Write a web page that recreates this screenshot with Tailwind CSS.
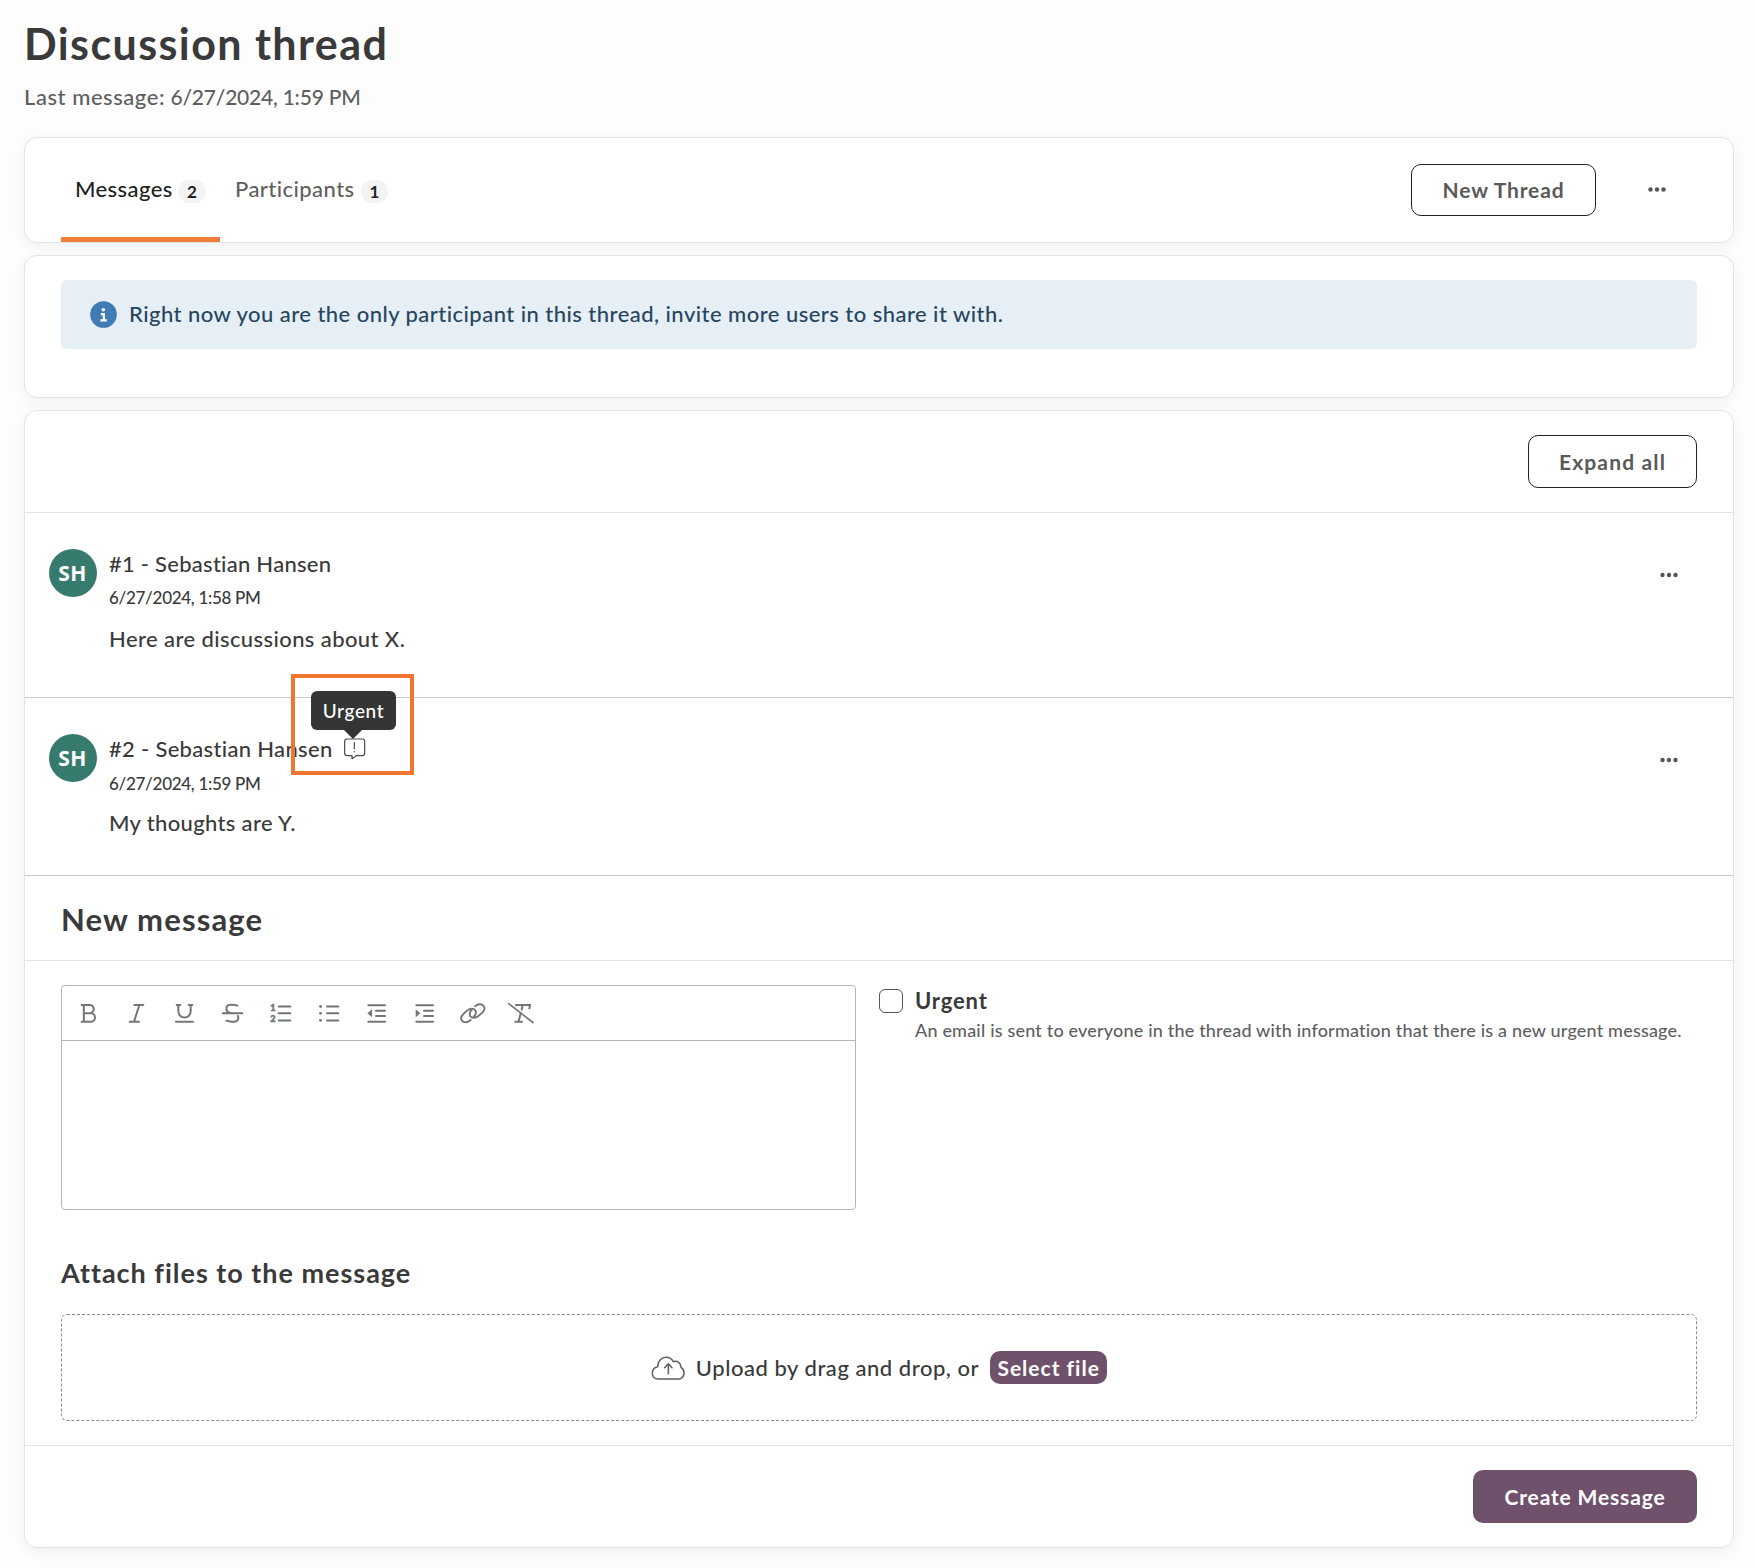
<!DOCTYPE html>
<html lang="en">
<head>
<meta charset="utf-8">
<title>Discussion thread</title>
<script src="https://cdn.jsdelivr.net/npm/@tailwindcss/browser@4"></script>
</head>
<body class="bg-[#fdfdfd] font-['Lato','Open_Sans',sans-serif] font-medium text-[22px] leading-7 text-[#3a3a3a] whitespace-nowrap">
<main class="flex flex-col w-[1710px] ml-6 pt-5 pb-5">
  <h1 class="text-[43px] leading-[48px] font-bold tracking-[1.42px]">Discussion thread</h1>
  <p class="mt-[15px] mb-[26px] text-[#5f5f5f]"><span class="tracking-[0.55px]">Last message:</span> <span class="text-[21px] tracking-[-0.22px]">6/27/2024, 1:59 PM</span></p>

  <section class="flex h-[106px] justify-between rounded-[13px] border border-[#e3e3e3] bg-white px-9 shadow-[0_4px_16px_rgba(0,0,0,0.05)]">
    <nav class="flex">
      <a class="flex w-[159px] items-center border-b-[5px] border-[#f07d3a] pt-[3px] pl-[14px] text-[#1f1f1f]">
        <span class="w-[103px] tracking-[0.4px]">Messages</span>
        <span class="mt-[5px] flex h-[23px] w-7 items-center justify-center rounded-full bg-[#f3f3f3] text-[17px] font-bold">2</span>
      </a>
      <a class="flex items-center border-b-[5px] border-transparent pt-[3px] pl-[15px] text-[#5f5f5f]">
        <span class="w-[126px] tracking-[0.44px]">Participants</span>
        <span class="mt-[5px] flex h-[23px] w-[27px] items-center justify-center rounded-full bg-[#f3f3f3] text-[17px] font-bold text-[#1f1f1f]">1</span>
      </a>
    </nav>
    <div class="flex items-center">
      <button class="flex h-[52px] w-[185px] items-center justify-center rounded-[10px] border border-[#222] font-bold text-[21px] tracking-[0.85px] text-[#5a5a5a]">New Thread</button>
      <button class="ml-5 flex w-[81px] justify-center pb-px" aria-label="More">
        <svg class="h-6 w-6" viewBox="0 0 24 24" fill="#555"><circle cx="5.5" cy="11.5" r="2.2"/><circle cx="12" cy="11.5" r="2.2"/><circle cx="18.5" cy="11.5" r="2.2"/></svg>
      </button>
    </div>
  </section>

  <section class="mt-3 h-[143px] rounded-[13px] border border-[#e3e3e3] bg-white px-9 pt-6 shadow-[0_4px_16px_rgba(0,0,0,0.05)]">
    <div class="flex h-[69px] items-center rounded-md bg-[#e6eef6] pl-[29px] pb-px text-[#26465f]">
      <svg class="h-[27px] w-[27px]" viewBox="0 0 27 27"><circle cx="13.5" cy="13.5" r="13.3" fill="#3f7bb5"/><circle cx="13.3" cy="8.7" r="1.8" fill="#fff"/><path d="M10.8 13.2h3v5.9M10.4 19.3h6.4" stroke="#fff" stroke-width="2.2" fill="none"/></svg>
      <span class="ml-3 pb-px tracking-[0.46px]">Right now you are the only participant in this thread, invite more users to share it with.</span>
    </div>
  </section>

  <section class="mt-3 rounded-[13px] border border-[#e3e3e3] bg-white shadow-[0_4px_16px_rgba(0,0,0,0.05)]">
    <div class="flex h-[102px] items-start justify-end border-b border-[#e3e3e3] px-9 pt-6">
      <button class="flex h-[53px] w-[169px] items-center justify-center rounded-[10px] border border-[#222] font-bold text-[21px] tracking-[1.15px] text-[#5a5a5a]">Expand all</button>
    </div>

    <article class="flex h-[185px] border-b border-[#cbcbcb] pt-9 pr-[52.5px] pl-6">
      <div class="flex h-12 w-12 items-center justify-center rounded-full bg-[#377b6f] pr-px font-['Open_Sans',sans-serif] text-[21px] font-bold tracking-[0.5px] text-white">SH</div>
      <div class="ml-3 mt-px flex-1">
        <div class="tracking-[0.26px]">#1 - Sebastian Hansen</div>
        <div class="mt-2 text-[17px] leading-6 tracking-[-0.3px]">6/27/2024, 1:58 PM</div>
        <div class="mt-[15px] tracking-[0.4px]">Here are discussions about X.</div>
      </div>
      <svg class="mt-[14px] h-6 w-6" viewBox="0 0 24 24" fill="#555"><circle cx="5.5" cy="12" r="2.2"/><circle cx="12" cy="12" r="2.2"/><circle cx="18.5" cy="12" r="2.2"/></svg>
    </article>

    <article class="flex h-[178px] border-b border-[#cbcbcb] pt-9 pr-[52.5px] pl-6">
      <div class="flex h-12 w-12 items-center justify-center rounded-full bg-[#377b6f] pr-px font-['Open_Sans',sans-serif] text-[21px] font-bold tracking-[0.5px] text-white">SH</div>
      <div class="ml-3 mt-px flex-1">
        <div class="flex">
          <span class="w-[233px] tracking-[0.32px]">#2 - Sebastian Hansen</span>
          <span class="relative mt-px h-6 w-6">
            <svg class="h-6 w-6" viewBox="1026 648 72 72" fill="none" stroke="#4a4a4a" stroke-width="3.6" stroke-linejoin="round" stroke-linecap="round"><path d="M1041 657H1087a7 7 0 0 1 7 7V700a7 7 0 0 1-7 7H1069L1056 716V707H1041a7 7 0 0 1-7-7V664a7 7 0 0 1 7-7ZM1063 668V686M1063 694.5V695.5"/></svg>
            <span class="absolute -top-[62px] -left-[51px] h-[101px] w-[123px] border-4 border-[#f07630]"></span>
            <span class="absolute -top-[45px] -left-[31px] flex h-[39px] w-[85px] items-center justify-center rounded-md bg-[#2e2e2e]/97 text-[19px] tracking-[0.65px] text-white">Urgent</span>
            <svg class="absolute -top-1.5 left-0.5 h-[9px] w-[18px]" viewBox="0 0 18 9" fill="#333"><path d="M0 0H18L9 9Z"/></svg>
          </span>
        </div>
        <div class="mt-[9px] text-[17px] leading-6 tracking-[-0.3px]">6/27/2024, 1:59 PM</div>
        <div class="mt-[13px] tracking-[0.34px]">My thoughts are Y.</div>
      </div>
      <svg class="mt-[14px] h-6 w-6" viewBox="0 0 24 24" fill="#555"><circle cx="5.5" cy="12" r="2.2"/><circle cx="12" cy="12" r="2.2"/><circle cx="18.5" cy="12" r="2.2"/></svg>
    </article>

    <div class="flex h-[85px] items-center border-b border-[#e3e3e3] px-9 pt-px">
      <h2 class="text-[31px] font-bold tracking-[1.15px]">New message</h2>
    </div>

    <div class="border-b border-[#e3e3e3] px-9 py-6">
      <div class="flex items-start">
        <div class="h-[225px] w-[795px] rounded border border-[#b5b5b5]">
          <div class="flex h-[55px] border-b border-[#b5b5b5] pl-0.5 [&>svg]:h-[54px] [&>svg]:w-12">
            <svg viewBox="72 378 144 162" fill="none" stroke="#757575" stroke-width="6" stroke-linecap="round"><path d="M125 435H149a12 12 0 0 1 0 24.5H131M149 459.5H152a13 13 0 0 1 0 26H125M131.5 435V485"/></svg>
            <svg viewBox="216 378 144 162" fill="none" stroke="#757575" stroke-width="6" stroke-linecap="round"><path d="M283 435H310M269 485.5H297M298 435L282 485"/></svg>
            <svg viewBox="360 378 144 162" fill="none" stroke="#757575" stroke-width="6" stroke-linecap="round"><path d="M410 435H421M446 435H457M415 436V454a18.5 18.5 0 0 0 37 0V436M408 485.5H459"/></svg>
            <svg viewBox="504 378 144 162" fill="none" stroke="#757575" stroke-width="6" stroke-linecap="round"><path d="M548 460H607M592 437C579 433 559 431 559 446C559 455 568 459 578 460M594 468C599 486 582 489 559 482"/></svg>
            <svg viewBox="648 378 144 162" fill="none" stroke="#757575" stroke-width="6" stroke-linecap="round"><path d="M716 439.5H751M716 460H751M716 481.5H751"/><g fill="#757575" stroke-width="1.5" font-size="27" font-weight="900" font-family="Lato, sans-serif"><text x="691" y="453">1</text><text x="691" y="487">2</text></g></svg>
            <svg viewBox="792 378 144 162" fill="none" stroke="#757575" stroke-width="6" stroke-linecap="round"><path d="M861 439.5H895M861 460H895M861 481.5H895"/><g fill="#757575" stroke="none"><circle cx="841.5" cy="439.5" r="4.3"/><circle cx="841.5" cy="460" r="4.3"/><circle cx="841.5" cy="481" r="4.3"/></g></svg>
            <svg viewBox="936 378 144 162" fill="none" stroke="#757575" stroke-width="6" stroke-linecap="round"><path d="M985 435.5H1035M1008 452H1035M1008 468H1035M985 485H1035"/><path d="M996 448V472L982 460Z" fill="#757575" stroke="none"/></svg>
            <svg viewBox="1080 378 144 162" fill="none" stroke="#757575" stroke-width="6" stroke-linecap="round"><path d="M1129 435.5H1179M1152 452H1179M1152 468H1179M1129 485H1179"/><path d="M1127 448V472L1141 460Z" fill="#757575" stroke="none"/></svg>
            <svg viewBox="1224 378 144 162" fill="none" stroke="#757575" stroke-width="5.6" stroke-linecap="round"><path d="M1292 480C1283 489 1271 488 1266 482C1261 475 1264 468 1270 462L1282 451C1290 444 1301 444 1306 451C1310 458 1307 465 1301 471M1305 439C1314 431 1326 431 1331 438C1336 445 1333 452 1327 458L1315 468C1306 475 1296 475 1291 469C1287 462 1289 456 1295 449"/></svg>
            <svg viewBox="1368 378 144 162" fill="none" stroke="#757575" stroke-width="6" stroke-linecap="round"><path d="M1425 443L1428 435H1470L1468 445M1448 436L1436 484M1426 485.5H1446"/><path d="M1411 429L1484 485" stroke="#fff" stroke-width="5"/><path d="M1406 431L1479 487.5" stroke-width="5"/></svg>
          </div>
        </div>
        <div class="mt-1 ml-[23px] h-6 w-6 rounded-md border border-[#555] bg-white"></div>
        <div class="ml-3 mt-0.5">
          <div class="font-bold tracking-[0.85px]">Urgent</div>
          <div class="mt-[3px] text-[18px] leading-6 tracking-[0.185px] text-[#5f5f5f]">An email is sent to everyone in the thread with information that there is a new urgent message.</div>
        </div>
      </div>
      <h3 class="mt-[47px] text-[27px] leading-8 font-bold tracking-[0.98px]">Attach files to the message</h3>
      <div class="mt-[25px] flex h-[107px] items-center justify-center rounded-md border border-dashed border-[#8c8c8c]">
        <svg class="h-6 w-[34px]" viewBox="88 165 102 72" fill="none" stroke="#5f5f5f" stroke-width="4.6" stroke-linecap="round" stroke-linejoin="round"><path d="M109 234C98 234 92 226 92 216C92 207 98 199 108 197C108 181 119 169 133 169C143 169 151 174 155 182C167 178 178 186 178 199C184 203 187 208 187 215C187 226 180 234 171 234ZM140 218V190M129 200L140 188L151 200"/></svg>
        <span class="ml-[11px] tracking-[0.53px]">Upload by drag and drop, or</span>
        <span class="ml-[11px] flex h-[33px] w-[117px] items-center justify-center rounded-[10px] bg-[#70516b] pt-px font-bold text-[21px] tracking-[1px] text-white">Select file</span>
      </div>
    </div>

    <div class="flex h-[101px] items-start justify-end px-9 pt-6">
      <button class="flex h-[53px] w-[224px] items-center justify-center rounded-[10px] bg-[#70516b] font-bold text-[21px] tracking-[0.85px] text-white">Create Message</button>
    </div>
  </section>
</main>
</body>
</html>
